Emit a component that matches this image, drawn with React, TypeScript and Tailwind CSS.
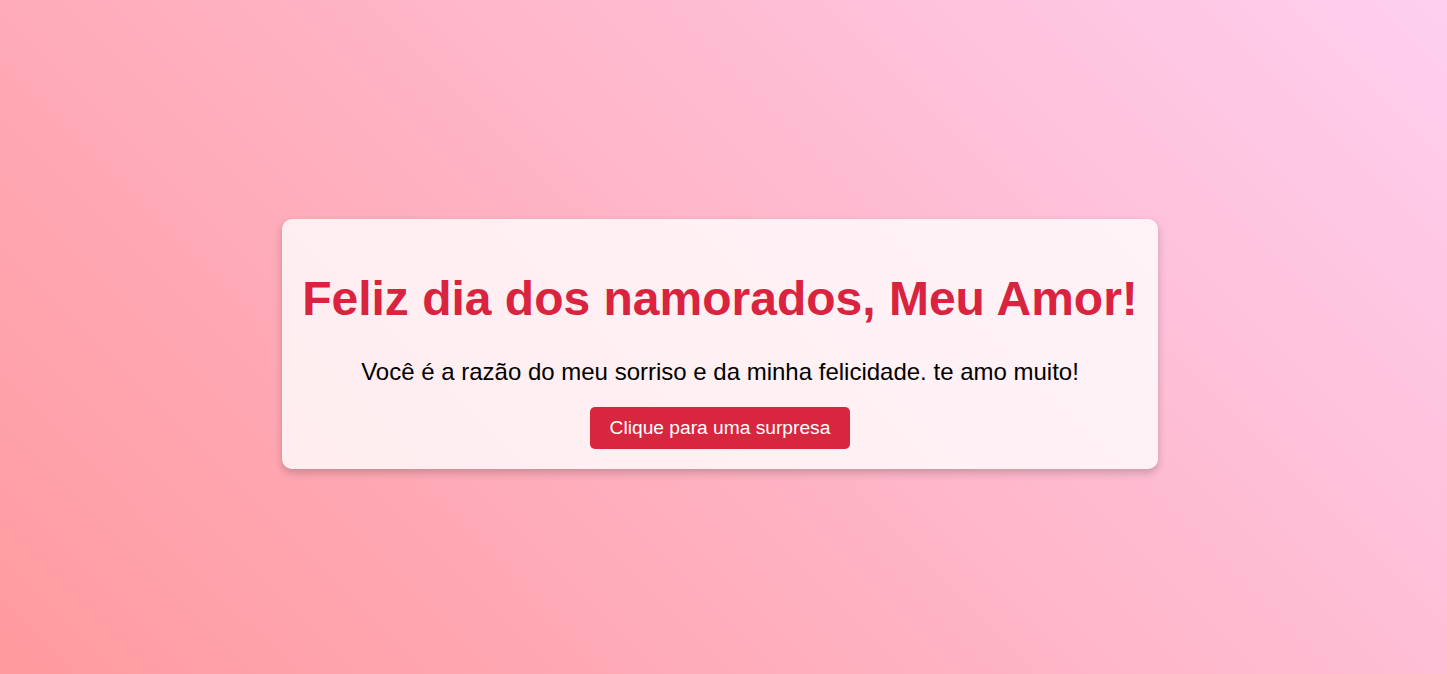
export default function App() {
  return (
    <div
      className="flex h-screen items-center justify-center bg-[linear-gradient(45deg,#ff9a9e_0%,#fecfef_100%)] pr-[7px] pt-[14px]"
      style={{ fontFamily: '"Liberation Sans", Arial, sans-serif' }}
    >
      <div className="w-fit rounded-[10px] bg-white/80 p-5 text-center shadow-[0_4px_8px_rgba(0,0,0,0.2)]">
        <h1 className="mt-[33px] mb-8 text-[48px] font-bold leading-[1.117] text-[#d9233f]">
          Feliz dia dos namorados, Meu Amor!
        </h1>
        <p className="mt-6 mb-[21px] text-[24px] leading-[1.15] text-black">
          Você é a razão do meu sorriso e da minha felicidade. te amo muito!
        </p>
        <button className="rounded-[5px] bg-[#d9263f] px-5 py-2.5 text-[19.2px] leading-[1.15] text-white">
          Clique para uma surpresa
        </button>
      </div>
    </div>
  );
}
